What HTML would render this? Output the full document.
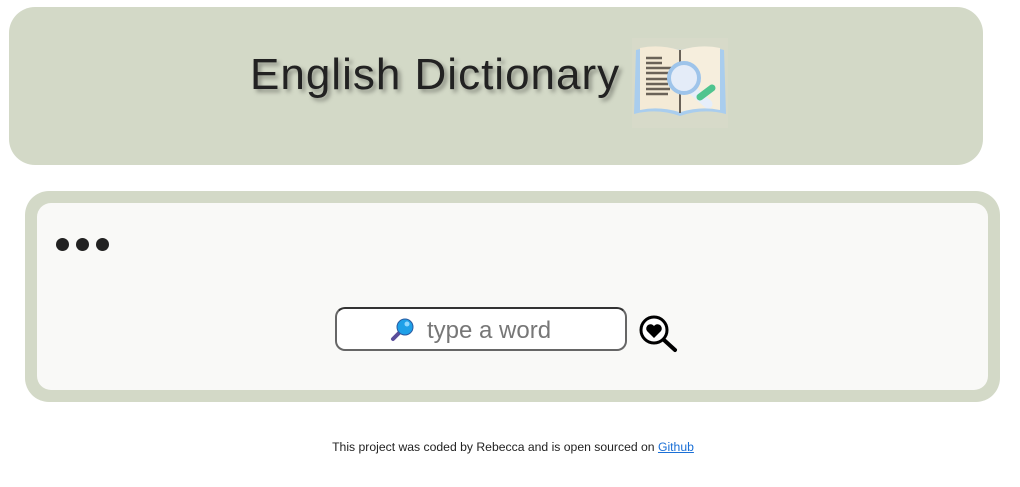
<!DOCTYPE html>
<html><head><style>
body{margin:0;width:1020px;height:487px;background:#fff;font-family:"Liberation Sans",sans-serif;position:relative;overflow:hidden}
.hdr{position:absolute;left:9px;top:7px;width:974px;height:158px;background:#d3d9c7;border-radius:26px}
.title{position:absolute;left:250px;top:50px;font-size:44px;color:#222;text-shadow:3px 3px 4px rgba(0,0,0,.35);white-space:nowrap;letter-spacing:1px}
.card{position:absolute;left:25px;top:191px;width:975px;height:211px;background:#d3d9c7;border-radius:24px}
.inner{position:absolute;left:12px;top:12px;right:12px;bottom:12px;background:#f9f9f7;border-radius:14px}
.dot{position:absolute;top:35px;width:13px;height:13px;border-radius:50%;background:#222}
.inp{position:absolute;left:335px;top:307px;width:288px;height:40px;border:2px solid #666;border-top-color:#333;border-radius:10px;background:#fff}
.ph{position:absolute;left:90px;top:8px;font-size:24px;color:#777}
.foot{position:absolute;top:440px;left:0;width:1026px;text-align:center;font-size:12.2px;color:#222}
.foot a{color:#1a6fd6;text-decoration:underline}
</style></head><body>
<div class="hdr"></div>
<div class="title">English Dictionary</div>
<svg style="position:absolute;left:632px;top:38px" width="96" height="90" viewBox="0 0 96 90">
<rect x="0" y="0" width="96" height="90" fill="#dcdccc" opacity=".5"/>
<path d="M4 12 Q25 6 48 12 Q71 6 92 12 L94 76 Q71 70 48 78 Q25 70 2 76Z" fill="#a9cdee"/>
<path d="M8 10 Q27 6 47 12 L47 74 Q27 68 8 72Z" fill="#f4ead6"/>
<path d="M49 12 Q69 6 88 10 L88 72 Q69 68 49 74Z" fill="#f6eedd"/>
<line x1="48" y1="12" x2="48" y2="75" stroke="#6a6258" stroke-width="2"/>
<g stroke="#6a6258" stroke-width="2.5"><line x1="14" y1="20" x2="30" y2="20"/><line x1="14" y1="25" x2="30" y2="25"/><line x1="14" y1="30" x2="42" y2="30"/><line x1="14" y1="35" x2="42" y2="35"/><line x1="14" y1="41" x2="38" y2="41"/><line x1="14" y1="46" x2="36" y2="46"/><line x1="14" y1="51" x2="38" y2="51"/><line x1="14" y1="56" x2="36" y2="56"/></g>
<line x1="60" y1="52" x2="76" y2="66" stroke="#e6eefa" stroke-width="9" stroke-linecap="round"/>
<line x1="68" y1="59" x2="80" y2="50" stroke="#4fc48f" stroke-width="7" stroke-linecap="round"/>
<circle cx="52" cy="40" r="15" fill="#e4ecf8" stroke="#9ec4ea" stroke-width="4"/>
</svg>
<div class="card"><div class="inner">
<div class="dot" style="left:19px"></div><div class="dot" style="left:39px"></div><div class="dot" style="left:59px"></div>
</div></div>
<div class="inp">
<svg style="position:absolute;left:52px;top:8px" width="26" height="26" viewBox="0 0 26 26"><line x1="4" y1="22" x2="11" y2="15" stroke="#5a4e9a" stroke-width="4" stroke-linecap="round"/><circle cx="16" cy="10" r="8" fill="#1ea0e8" stroke="#2a5aa0" stroke-width="1"/><circle cx="18" cy="7" r="2.5" fill="#8fd8ff"/></svg>
<div class="ph">type a word</div>
</div>
<svg style="position:absolute;left:638px;top:313px" width="40" height="40" viewBox="0 0 40 40"><circle cx="16" cy="17" r="13" fill="#fff" stroke="#000" stroke-width="3"/><line x1="26" y1="27" x2="37" y2="37" stroke="#000" stroke-width="4" stroke-linecap="round"/><path d="M16 25 L9 18 A4 4 0 0 1 16 13 A4 4 0 0 1 23 18Z" fill="#000"/></svg>
<div class="foot">This project was coded by Rebecca and is open sourced on <a>Github</a></div>
</body></html>
